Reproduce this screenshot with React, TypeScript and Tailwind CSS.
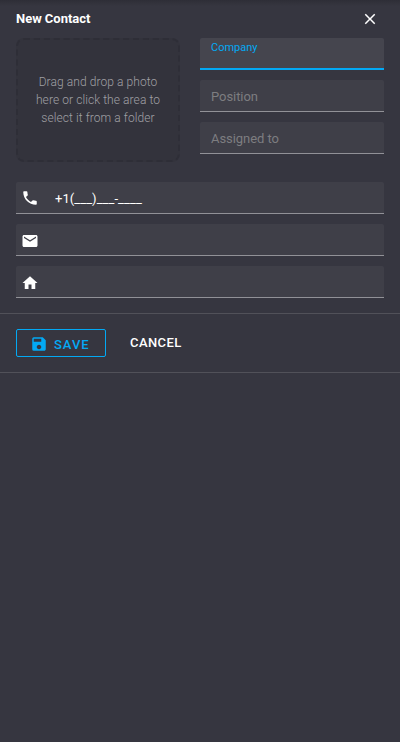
import React from 'react';
import { MdPhone, MdEmail, MdHome, MdClose, MdSave } from 'react-icons/md';

function Field({ label, icon, value }: { label?: string; icon?: React.ReactNode; value?: string }) {
  return (
    <div className="flex h-8 items-center rounded-t-[2px] border-b border-[#919197] bg-[#3f3f48] text-[13px]">
      {icon && <span className="ml-[5px] mt-[2px] text-lg text-white">{icon}</span>}
      {label && <span className="ml-[11px] mt-[2px] tracking-[-0.06px] text-[#7d7d80]">{label}</span>}
      {value && <span className="ml-4 mt-[2px] tracking-[0.06px] text-white">{value}</span>}
    </div>
  );
}

export default function App() {
  return (
    <div className="h-[742px] w-[400px] overflow-hidden bg-[#363640] font-[Roboto,sans-serif] text-[13px]">
      <div className="h-[6px] bg-linear-to-b from-[#2e2e37] to-[#363640]" />
      <header className="flex h-8 items-start justify-between px-4">
        <h1 className="mt-[3px] text-[13px] leading-5 font-bold tracking-[-0.03px] text-white">New Contact</h1>
        <button className="mt-1 mr-[5px] text-lg text-white" aria-label="Close">
          <MdClose />
        </button>
      </header>
      <div className="flex gap-5 px-4">
        <div className="flex h-[124px] w-[164px] items-center justify-center rounded-lg border-2 border-dashed border-[#2e2e37] bg-[#33333c] text-center text-xs leading-[18px] font-light tracking-[0.08px] text-[#a0a0a5]">
          <p>
            Drag and drop a photo
            <br />
            here or click the area to
            <br />
            select it from a folder
          </p>
        </div>
        <div className="flex w-[184px] flex-col gap-[10px]">
          <div className="h-8 rounded-t-[2px] border-b-2 border-[#03a9f4] bg-[#45454e] pt-[2px] pl-[11px] text-[11px] leading-4 text-[#03a9f4]">
            Company
          </div>
          <Field label="Position" />
          <Field label="Assigned to" />
        </div>
      </div>
      <div className="mt-5 flex flex-col gap-[10px] px-4">
        <Field icon={<MdPhone className="-mt-px mb-px" />} value="+1(___)___-____" />
        <Field icon={<MdEmail />} />
        <Field icon={<MdHome />} />
      </div>
      <footer className="mt-[15px] flex h-[60px] items-start border-y border-[#515159] px-4 pt-[15px] font-medium">
        <button className="flex h-7 w-[90px] items-center rounded-[2px] border border-[#03a9f4] pl-[13px] text-[#03a9f4]">
          <MdSave className="mt-[2px] text-lg" />
          <span className="mt-[3px] ml-[6px] tracking-[1px]">SAVE</span>
        </button>
        <button className="ml-6 h-7 tracking-[0.4px] text-white">CANCEL</button>
      </footer>
    </div>
  );
}
